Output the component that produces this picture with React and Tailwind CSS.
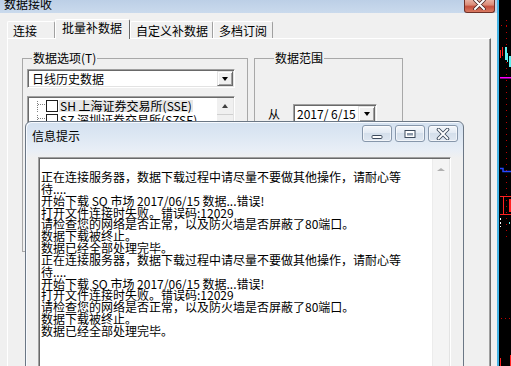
import React from 'react';

// shared font stack: CJK first so the dialog text keeps its full-width look
const FONT = "font-['Noto_Sans_CJK_SC','Noto_Sans',sans-serif]";

const SUNKEN =
    'border border-t-[#a0a0a0] border-l-[#a0a0a0] border-r-white border-b-white shadow-[inset_1px_1px_0_#696969,inset_-1px_-1px_0_#e3e3e3] p-[1px]';
const RAISED =
    'border border-t-[#e3e3e3] border-l-[#e3e3e3] border-r-[#696969] border-b-[#696969] shadow-[inset_1px_1px_0_#fff,inset_-1px_-1px_0_#a0a0a0] bg-[#f0f0f0]';

const logBlock = [
    '正在连接服务器，数据下载过程中请尽量不要做其他操作，请耐心等',
    '待....',
    '开始下载 SQ 市场 2017/06/15 数据...错误!',
    '打开文件连接时失败。错误码:12029',
    '请检查您的网络是否正常，以及防火墙是否屏蔽了80端口。',
    '数据下载被终止。',
    '数据已经全部处理完毕。',
];
const logLines = [...logBlock, ...logBlock];

const DownTriangle = () => (
    <span className="w-0 h-0 border-l-[3px] border-r-[3px] border-t-[4px] border-l-transparent border-r-transparent border-t-black" />
);

const TreeRow = ({ label, selected }) => (
    <div className="flex items-center h-[14px]">
        <svg width="17" height="14" className="shrink-0">
            <line x1="8.5" y1="2" x2="8.5" y2="14" stroke="#808080" strokeDasharray="1 1" />
            <line x1="9" y1="5.5" x2="17" y2="5.5" stroke="#808080" strokeDasharray="1 1" />
        </svg>
        <span className="w-[12px] h-[12px] shrink-0 border border-[#1e1e1e] bg-white" />
        <span className={`ml-[1px] px-[1px] whitespace-pre ${selected ? 'bg-[#e6e6e6]' : ''}`}>{label}</span>
    </div>
);

const Tab = ({ label, width, active }) =>
    active ? (
        <div
            className="relative z-10 h-[20px] pt-[2px] pl-[6px] bg-[#f0f0f0] border-t border-l border-t-white border-l-white border-r border-r-[#696969] rounded-t-[2px] whitespace-pre"
            style={{ width }}
        >
            {label}
        </div>
    ) : (
        <div
            className="mt-[2px] h-[17px] pt-[3px] pl-[5px] bg-[#f0f0f0] border-t border-l border-t-white border-l-white border-r border-r-[#a0a0a0] rounded-t-[2px] whitespace-pre"
            style={{ width }}
        >
            {label}
        </div>
    );

const MainWindow = () => (
    <div className="w-[497px] h-full flex flex-col shrink-0">
        {/* title bar */}
        <div className="h-[16px] flex justify-between bg-[linear-gradient(to_bottom,#bccfe6,#cadaed)]">
            <span className="pl-[4px] -mt-[2px]">数据接收</span>
            <div className="mr-[2px] w-[31px] h-[13px] rounded-b-[3px] border border-t-0 border-[#6e3027] bg-[linear-gradient(to_bottom,#e9b1a2,#db8c78_40%,#c4503d_55%,#d97a62)] flex justify-center">
                <svg width="13" height="10" viewBox="0 0 13 10">
                    <path d="M2 0 L11 9 M11 0 L2 9" stroke="#4a2a26" strokeWidth="3.6" strokeLinecap="round" />
                    <path d="M2 0 L11 9 M11 0 L2 9" stroke="#fff" strokeWidth="2" strokeLinecap="round" />
                </svg>
            </div>
        </div>

        {/* dialog body */}
        <div className="flex-1 pl-[7px] pr-[6px] pt-[6px]">
            <div className="flex items-start h-[20px]">
                <Tab label="连接" width={48} />
                <Tab label="批量补数据" width={75} active />
                <Tab label="自定义补数据" width={83} />
                <Tab label="多档订阅" width={60} />
            </div>

            <div className="-mt-[1px] h-[330px] border-t border-l border-t-white border-l-white border-r border-r-[#696969] shadow-[inset_-1px_0_0_#a0a0a0] flex items-start pl-[14px] pt-[13px]">
                {/* 数据选项 */}
                <fieldset className="w-[226px] h-[200px] border border-[#a8a8a8] px-[4px] pt-[5px]">
                    <legend className="ml-[5px] px-[1px] leading-[12px]">数据选项(T)</legend>
                    <div className={`w-[208px] h-[19px] flex bg-white ${SUNKEN}`}>
                        <span className="flex-1 pl-[3px] flex items-center">日线历史数据</span>
                        <span className={`w-[16px] flex items-center justify-center ${RAISED}`}>
                            <DownTriangle />
                        </span>
                    </div>
                    <div className={`mt-[8px] w-[208px] h-[150px] flex bg-white ${SUNKEN}`}>
                        <div className="flex-1 pt-[1px]">
                            <TreeRow label="SH 上海证券交易所(SSE)" selected />
                            <TreeRow label="SZ 深圳证券交易所(SZSE)" />
                        </div>
                        <div className="w-[16px] bg-[#f0f0f0] flex flex-col">
                            <div className="h-[17px] flex items-center justify-center border-b border-[#d0d0d0]">
                                <span className="w-0 h-0 border-l-[3px] border-r-[3px] border-b-[4px] border-l-transparent border-r-transparent border-b-[#404040]" />
                            </div>
                        </div>
                    </div>
                </fieldset>

                {/* 数据范围 */}
                <fieldset className="ml-[6px] w-[149px] h-[200px] border border-[#a8a8a8] pl-[13px] pt-[40px]">
                    <legend className="ml-[6px] px-[1px] leading-[12px]">数据范围</legend>
                    <div className="flex items-start">
                        <span className="mt-[4px]">从</span>
                        <div className={`ml-[13px] w-[84px] h-[20px] flex bg-white ${SUNKEN}`}>
                            <span className="flex-1 pl-[2px] pt-[2px] whitespace-pre">2017/ 6/15</span>
                            <span className={`w-[17px] flex items-center justify-center ${RAISED}`}>
                                <DownTriangle />
                            </span>
                        </div>
                    </div>
                </fieldset>
            </div>
        </div>
    </div>
);

// the black quote chart peeking out at the right edge
const ChartStrip = () => (
    <div className="w-[14px] h-full shrink-0 bg-black">
        <svg width="14" height="366" viewBox="0 0 14 366">
            <rect x="0" y="0" width="2" height="366" fill="#45b4e6" />
            <line x1="4" y1="25.5" x2="14" y2="25.5" stroke="#c00000" strokeDasharray="1 4" />
            <line x1="9.5" y1="20" x2="9.5" y2="240" stroke="#c00000" strokeDasharray="1 5" />
            <rect x="3" y="50" width="1" height="8" fill="#ff2020" />
            <rect x="5" y="47" width="1" height="9" fill="#ff2020" />
            <rect x="8" y="47" width="2" height="13" fill="#5ff0f0" />
            <rect x="10" y="53" width="1" height="9" fill="#5ff0f0" />
            <rect x="12" y="56" width="2" height="11" fill="#5ff0f0" />
            <rect x="3" y="77" width="11" height="1.5" fill="#ff00ff" />
            <path d="M3 168.5 H6 V171.5 H14" stroke="#2448ff" fill="none" strokeWidth="1.5" />
            <line x1="3" y1="196.5" x2="14" y2="196.5" stroke="#ff2020" />
            <line x1="3" y1="214.5" x2="14" y2="214.5" stroke="#ff2020" />
            <line x1="6.5" y1="196" x2="6.5" y2="215" stroke="#ff2020" />
            <rect x="12" y="199" width="2" height="13" fill="#ff2020" />
            <line x1="3.5" y1="218" x2="3.5" y2="227" stroke="#ffffff" strokeDasharray="2 2" />
            <rect x="12" y="222" width="1" height="2" fill="#5ff0f0" />
            <line x1="4" y1="318.5" x2="14" y2="318.5" stroke="#c00000" strokeDasharray="1 3" />
            <rect x="3" y="358" width="1" height="8" fill="#ff2020" />
            <rect x="13" y="355" width="1" height="11" fill="#ff2020" />
        </svg>
    </div>
);

const CaptionButton = ({ children }) => (
    <div className="w-[30px] h-[17px] rounded-[3px] border border-[#8797ab] bg-[linear-gradient(to_bottom,#f4f7fb,#e3eaf3_45%,#d4dfeb_50%,#dfe7f1)] shadow-[inset_0_0_0_1px_rgba(255,255,255,0.6)] flex items-center justify-center">
        {children}
    </div>
);

const InfoWindow = () => (
    <div className="absolute left-[25px] top-[121px] w-[439px] h-[250px] border border-[#6b7785] rounded-t-[6px] shadow-[inset_1px_1px_0_#f7faff] bg-[linear-gradient(to_bottom,#d4e1f0_0px,#dde7f3_14px,#e8eef6_28px,#f0f0f0_36px)] flex flex-col">
        <div className="flex justify-between pt-[3px] pr-[5px]">
            <span className="pl-[6px] mt-[5px]">信息提示</span>
            <div className="flex gap-[3px]">
                <CaptionButton>
                    <svg width="12" height="17" viewBox="0 0 12 17">
                        <rect x="1" y="10.5" width="10" height="3" rx="1" fill="#fff" stroke="#3c4a5c" />
                    </svg>
                </CaptionButton>
                <CaptionButton>
                    <svg width="12" height="17" viewBox="0 0 12 17">
                        <rect x="1" y="5.5" width="10" height="7" fill="#fff" stroke="#3c4a5c" />
                        <rect x="3" y="8" width="6" height="2.5" fill="#8a97a8" />
                    </svg>
                </CaptionButton>
                <CaptionButton>
                    <svg width="14" height="12" viewBox="0 0 14 12">
                        <path d="M2.5 1.5 L11.5 10.5 M11.5 1.5 L2.5 10.5" stroke="#3c4a5c" strokeWidth="3.6" strokeLinecap="round" />
                        <path d="M2.5 1.5 L11.5 10.5 M11.5 1.5 L2.5 10.5" stroke="#fff" strokeWidth="1.8" strokeLinecap="round" />
                    </svg>
                </CaptionButton>
            </div>
        </div>

        <div className={`ml-[12px] mt-[15px] w-[413px] flex-1 flex bg-white ${SUNKEN}`}>
            <div className="flex-1 pl-[1px] pt-[12px] leading-[11.85px]">
                {logLines.map((line, i) => (
                    <div key={i} className="whitespace-pre">
                        {line}
                    </div>
                ))}
            </div>
            <div className="w-[17px] bg-[#f4f4f4] border-l border-[#ececec] flex flex-col items-center pt-[9px]">
                <span className="w-0 h-0 border-l-[4px] border-r-[4px] border-b-[3px] border-l-transparent border-r-transparent border-b-[#b0b0b0]" />
            </div>
        </div>
    </div>
);

export default function App() {
    return (
        <div className={`relative w-[511px] h-[366px] overflow-hidden flex bg-[#f0f0f0] text-black text-[12px] leading-[12px] ${FONT}`}>
            <MainWindow />
            <ChartStrip />
            <InfoWindow />
        </div>
    );
}
